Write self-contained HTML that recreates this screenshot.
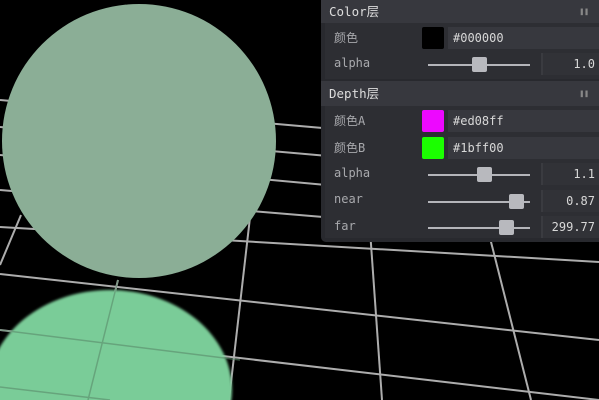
<!DOCTYPE html>
<html><head><meta charset="utf-8"><style>
html,body{margin:0;width:599px;height:400px;overflow:hidden;}
body{background:#000;position:relative;font-family:"DejaVu Sans Mono","Noto Sans CJK SC",monospace;}
.panel{position:absolute;left:321px;top:0;width:278px;height:242px;background:#28292e;border-radius:0 0 0 5px;}
.hdr{position:absolute;left:0;width:278px;height:23px;background:#37383e;color:#ddd;font-size:12.5px;line-height:23px;}
.hdr span{position:absolute;left:8px;}
.hdr i{position:absolute;right:10px;top:0;font-style:normal;color:#888;font-size:8px;}
.body{position:absolute;left:4px;width:274px;background:#2d2e33;}
.lab{position:absolute;left:9px;color:#a8a9ad;font-size:12px;}
.sw{position:absolute;left:97px;width:22px;height:22px;border-radius:2px;}
.tf{position:absolute;left:123px;width:151px;height:22px;background:#37383e;color:#d8d8d8;font-size:12px;line-height:22px;text-indent:5px;}
.tr{position:absolute;left:103px;width:102px;height:2px;background:#b4b5ba;}
.tr b{position:absolute;top:-7px;width:15px;height:15px;border-radius:2px;background:#b8b9be;}
.nb{position:absolute;left:216px;width:58px;height:22px;background:#313237;color:#d8d8d8;font-size:12px;line-height:22px;text-align:right;box-sizing:border-box;padding-right:4px;border-left:2px solid #3a3b40;}
</style></head><body>
<svg width="599" height="400" style="position:absolute;left:0;top:0;display:block">
<defs><filter id="g"><feGaussianBlur stdDeviation="1.2"/></filter></defs>
<g stroke="#ccc" stroke-width="2" fill="none" opacity="0.85">
<line x1="0" y1="100" x2="599" y2="152"/>
<line x1="0" y1="127" x2="599" y2="180"/>
<line x1="0" y1="155" x2="599" y2="210"/>
<line x1="0" y1="190" x2="599" y2="240"/>
<line x1="0" y1="227" x2="599" y2="262"/>
<line x1="0" y1="274" x2="599" y2="340"/>
<line x1="0" y1="330" x2="599" y2="400"/>
<line x1="0" y1="387" x2="110" y2="400"/>
<line x1="21" y1="215" x2="0" y2="265"/>
<line x1="118" y1="280" x2="88" y2="400"/>
<line x1="252" y1="200" x2="229" y2="400"/>
<line x1="370" y1="230" x2="382" y2="400"/>
<line x1="488" y1="230" x2="531" y2="400"/>
</g>
<ellipse cx="110" cy="390" rx="122" ry="100" fill="#7acc98" filter="url(#g)"/>
<g stroke="#5a8a6a" stroke-width="1.5" opacity="0.6">
<line x1="118" y1="280" x2="88" y2="400"/>
<line x1="0" y1="330" x2="240" y2="360"/>
<line x1="0" y1="387" x2="110" y2="400"/>
</g>
<circle cx="139" cy="141" r="137" fill="#8bae96"/>
</svg>
<div class="panel">
<div class="hdr" style="top:0"><span>Color层</span><i>❚❚</i></div>
<div class="body" style="top:23px;height:56px">
<div class="lab" style="top:6px">颜色</div>
<div class="sw" style="top:4px;background:#000"></div>
<div class="tf" style="top:4px">#000000</div>
<div class="lab" style="top:33px">alpha</div>
<div class="tr" style="top:41px"><b style="left:44px"></b></div>
<div class="nb" style="top:30px">1.0</div>
</div>
<div class="hdr" style="top:81px;height:25px;line-height:25px"><span>Depth层</span><i>❚❚</i></div>
<div class="body" style="top:106px;height:132px">
<div class="lab" style="top:6px">颜色A</div>
<div class="sw" style="top:4px;background:#ed08ff"></div>
<div class="tf" style="top:4px">#ed08ff</div>
<div class="lab" style="top:33px">颜色B</div>
<div class="sw" style="top:31px;background:#1bff00"></div>
<div class="tf" style="top:31px">#1bff00</div>
<div class="lab" style="top:60px">alpha</div>
<div class="tr" style="top:68px"><b style="left:49px"></b></div>
<div class="nb" style="top:57px">1.1</div>
<div class="lab" style="top:86px">near</div>
<div class="tr" style="top:95px"><b style="left:81px"></b></div>
<div class="nb" style="top:84px">0.87</div>
<div class="lab" style="top:113px">far</div>
<div class="tr" style="top:121px"><b style="left:71px"></b></div>
<div class="nb" style="top:110px">299.77</div>
</div>
</div>
</body></html>
